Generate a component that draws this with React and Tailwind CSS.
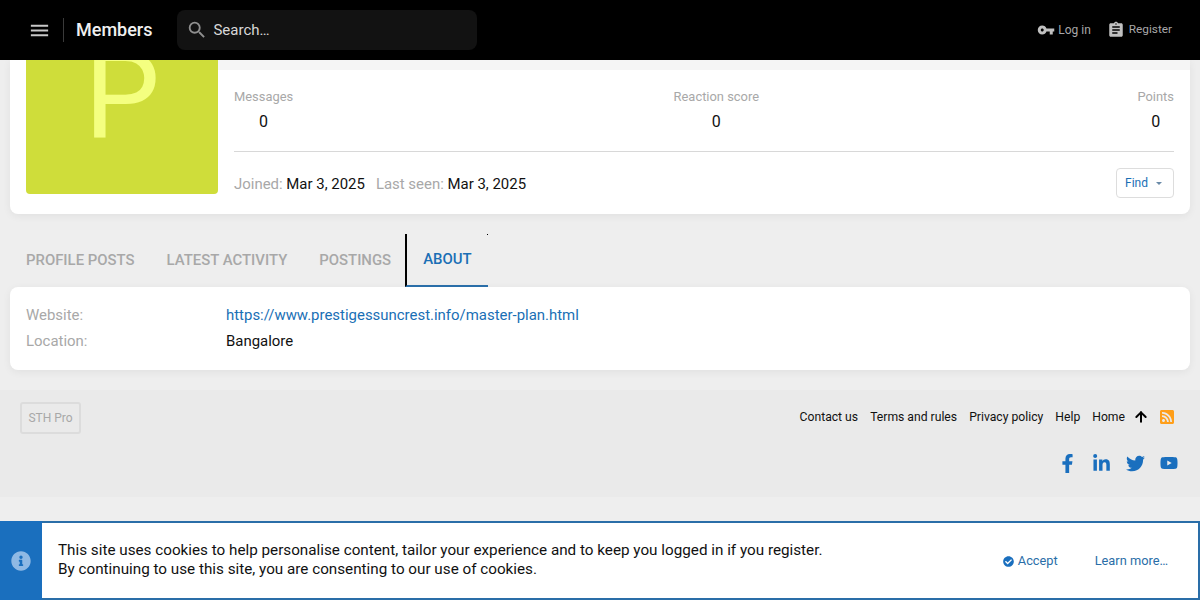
import { ArrowUp } from 'lucide-react';
import { FaCheckCircle, FaFacebookF, FaInfoCircle, FaLinkedinIn, FaRssSquare, FaTwitter, FaYoutube } from 'react-icons/fa';
import { MdAssignment, MdMenu, MdSearch, MdVpnKey } from 'react-icons/md';

const footerLinks = ['Contact us', 'Terms and rules', 'Privacy policy', 'Help', 'Home'];

function Stat({ label, value, className }) {
  return (
    <div className={className}>
      <div className="text-[12.9px] leading-[18px] text-[#a8a8a8]">{label}</div>
      <div className="mt-[4px] text-center text-[16px] leading-[24px] text-[#111111]">{value}</div>
    </div>
  );
}

export default function App() {
  return (
    <div className="relative flex h-[600px] w-[1200px] flex-col overflow-hidden bg-[#eeeeee] font-['Roboto',sans-serif] text-[#111111]">
      {/* Top bar */}
      <header className="relative z-10 flex h-[60px] shrink-0 items-center bg-black pl-[28px] pr-[28px]">
        <MdMenu className="h-[23px] w-[23px] text-[#c8c8c8]" />
        <div className="ml-[12px] h-[24px] w-px bg-[#3a3a3a]" />
        <div className="ml-[12px] pb-px text-[18px] font-medium text-[#f0f0f0]">Members</div>
        <div className="ml-[25px] flex h-[40px] w-[300px] items-center rounded-lg bg-[#121212] pl-[9px]">
          <MdSearch className="h-[22px] w-[22px] text-[#8f8f8f]" />
          <span className="ml-[5px] text-[15px] text-[#d8d8d8]">Search…</span>
        </div>
        <div className="ml-auto flex items-center text-[12px] text-[#a8a8a8]">
          <MdVpnKey className="h-[18px] w-[18px] text-[#c0c0c0]" />
          <span className="ml-[3px]">Log in</span>
          <MdAssignment className="ml-[16px] h-[18px] w-[18px] text-[#c0c0c0]" />
          <span className="ml-[4px] text-[11.8px]">Register</span>
        </div>
      </header>

      {/* Profile card */}
      <div className="mx-[10px] flex h-[154px] shrink-0 rounded-b-lg bg-white pl-[16px] shadow-[0_2px_8px_rgba(0,0,0,0.06)]">
        <div className="-mt-[58px] flex h-[192px] w-[192px] shrink-0 items-center justify-center rounded bg-[#cfdd3a] pb-[3px] text-[120px] leading-none text-[#f4ff80]">
          P
        </div>
        <div className="flex-1">
          <div className="h-[10px] bg-[#f5f5f5]" />
          <div className="px-[16px]">
            <div className="flex justify-between pt-[18px]">
              <Stat label="Messages" value="0" />
              <Stat label="Reaction score" value="0" className="ml-[2px]" />
              <Stat label="Points" value="0" />
            </div>
            <div className="mt-[17px] h-px bg-[#d8d8d8]" />
            <div className="mt-[16px] flex h-[30px] items-center justify-between text-[14.95px]">
              <div className="pt-[2px]">
                <span className="text-[#a8a8a8]">Joined:</span> Mar 3, 2025
                <span className="ml-[11px] text-[#a8a8a8]">Last seen:</span> Mar 3, 2025
              </div>
              <button className="flex h-[30px] w-[58px] items-center gap-[8px] rounded border border-[#dddddd] pl-[8px] text-[12px] text-[#1a6fb5]">
                Find
                <span className="h-0 w-0 border-x-[3px] border-t-[3px] border-x-transparent border-t-[#6a8aa8]" />
              </button>
            </div>
          </div>
        </div>
      </div>

      {/* Tabs */}
      <div className="mt-[20px] flex h-[53px] shrink-0 pl-[10px] text-[14.92px] font-medium text-[#a8a8a8]">
        <div className="flex items-center px-[16px] pb-px">PROFILE POSTS</div>
        <div className="flex items-center px-[16px] pb-px">LATEST ACTIVITY</div>
        <div className="flex items-center pl-[16px] pr-[14px] pb-px">POSTINGS</div>
        <div className="relative flex items-center border-b-2 border-l-2 border-b-[#2a6ea8] border-l-black pl-[16px] pr-[16px] pb-px text-[#1a6fb5]">
          ABOUT
          <span className="absolute right-0 top-0 h-px w-px bg-black" />
        </div>
      </div>

      {/* About card */}
      <div className="mx-[10px] h-[83px] shrink-0 rounded-lg bg-white px-[16px] pt-[15px] text-[14.94px] leading-[26px] shadow-[0_2px_8px_rgba(0,0,0,0.06)]">
        <div className="flex">
          <div className="w-[200px] text-[#a8a8a8]">Website:</div>
          <div className="text-[#1a6fb5]">https://www.prestigessuncrest.info/master-plan.html</div>
        </div>
        <div className="flex">
          <div className="w-[200px] text-[#a8a8a8]">Location:</div>
          <div>Bangalore</div>
        </div>
      </div>

      {/* Footer */}
      <footer className="mt-[20px] flex h-[107px] shrink-0 justify-between bg-[#eaeaea] pl-[20px] pr-[14px] pt-[12px]">
        <div className="flex h-[32px] w-[61px] items-center justify-center rounded-[3px] border-2 border-[#dcdcdc] pb-px text-[12px] text-[#a8a8a8]">
          STH Pro
        </div>
        <div className="flex flex-col items-end">
          <div className="flex h-[30px] items-center pr-[11px] text-[12.18px]">
            <div className="flex gap-[12px]">
              {footerLinks.map((link) => (
                <span key={link}>{link}</span>
              ))}
            </div>
            <ArrowUp size={16} strokeWidth={3} className="ml-[8px] text-black" />
            <FaRssSquare className="ml-[10px] h-[16px] w-[16px] text-[#ff9f1a]" />
          </div>
          <div className="mt-[21px] flex h-[20px] items-center text-[#1a6fbe]">
            <div className="flex w-[34px] justify-center"><FaFacebookF className="h-[19px] w-[19px]" /></div>
            <div className="flex w-[34px] justify-center"><FaLinkedinIn className="h-[19px] w-[19px]" /></div>
            <div className="flex w-[34px] justify-center"><FaTwitter className="h-[19px] w-[19px]" /></div>
            <div className="flex w-[34px] justify-center"><FaYoutube className="h-[18px] w-[18px]" /></div>
          </div>
        </div>
      </footer>

      {/* Cookie notice */}
      <div className="absolute bottom-0 left-0 right-0 flex h-[79px] border-2 border-[#2a6ea8] bg-white">
        <div className="-my-[2px] -ml-[2px] flex w-[42px] shrink-0 items-center justify-center bg-[#1a6fbe]">
          <FaInfoCircle className="h-[20px] w-[20px] text-[#8fb9e4]" />
        </div>
        <div className="ml-[16px] flex-1 self-center pb-[2px] text-[15.24px] leading-[19px]">
          <div>This site uses cookies to help personalise content, tailor your experience and to keep you logged in if you register.</div>
          <div>By continuing to use this site, you are consenting to our use of cookies.</div>
        </div>
        <div className="mr-[30px] flex items-center pt-px text-[12.8px] text-[#2a6ea8]">
          <FaCheckCircle className="h-[11px] w-[11px] text-[#1a6fbe]" />
          <span className="ml-[4px]">Accept</span>
          <span className="ml-[37px]">Learn more…</span>
        </div>
      </div>
    </div>
  );
}
